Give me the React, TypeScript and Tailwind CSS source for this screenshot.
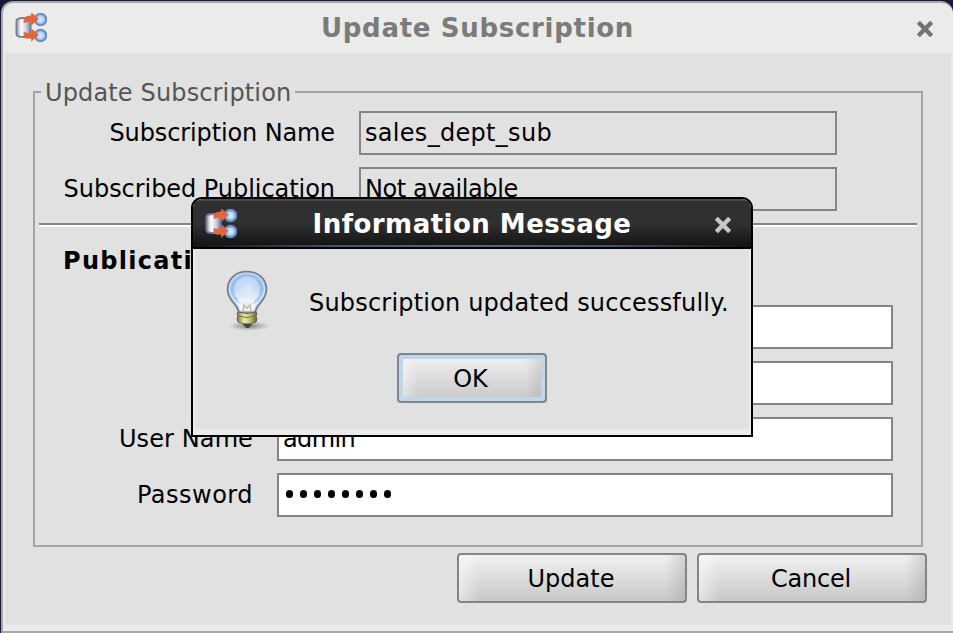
import React from 'react';

function ReplicationIcon({ className = '' }: { className?: string }) {
  return (
    <svg viewBox="0 0 32 32" className={`h-8 w-8 shrink-0 ${className}`}>
      <defs>
        <linearGradient id="cyl" x1="0" x2="1">
          <stop offset="0" stopColor="#9a9db8" />
          <stop offset="0.35" stopColor="#ffffff" />
          <stop offset="0.65" stopColor="#d5d6e4" />
          <stop offset="1" stopColor="#8286a8" />
        </linearGradient>
        <radialGradient id="orb">
          <stop offset="0" stopColor="#dbeeff" />
          <stop offset="0.55" stopColor="#b4d6f5" />
          <stop offset="1" stopColor="#6f95cc" />
        </radialGradient>
      </defs>
      <path d="M1.500 8c0-4 14-4 14 0v13c0 4-14 4-14 0z" fill="url(#cyl)" stroke="#7c7f9c" strokeWidth="2" />
      <circle cx="25.500" cy="6.500" r="5.800" fill="url(#orb)" stroke="#6b8fc4" strokeWidth="2" />
      <circle cx="25.500" cy="22.500" r="5.800" fill="url(#orb)" stroke="#6b8fc4" strokeWidth="2" />
      <path d="M9.500 5.500q3.500-2.500 7.500-2V1l5.500 5-5.500 5V8.500q-4-1-7.500.5z" fill="#ed6131" stroke="#dd6a42" strokeWidth="1.600" />
      <path d="M9.500 20q3.500 1.500 7.500 0v-3l5.500 5-5.500 5v-2.500q-4 1-7.500-.5z" fill="#ed6131" stroke="#dd6a42" strokeWidth="1.600" />
    </svg>
  );
}

function CloseIcon() {
  return (
    <svg viewBox="0 0 16 16" className="h-4 w-4" fill="none" stroke="currentColor" strokeWidth="4.400">
      <path d="M1.300 1.300l13.400 13.400M14.700 1.300L1.300 14.700" />
    </svg>
  );
}

function BulbIcon() {
  return (
    <svg viewBox="0 0 48 64" className="h-16 w-12">
      <defs>
        <radialGradient id="glass" cx=".5" cy=".45" r=".55">
          <stop offset="0" stopColor="#d9e8f8" />
          <stop offset=".65" stopColor="#b9d5f4" />
          <stop offset="1" stopColor="#8eb6e8" />
        </radialGradient>
        <linearGradient id="fade" x2="0" y2="1">
          <stop offset=".4" stopColor="#fff" stopOpacity="0" />
          <stop offset=".85" stopColor="#fafafa" stopOpacity=".95" />
        </linearGradient>
        <linearGradient id="brass">
          <stop offset="0" stopColor="#77783f" />
          <stop offset=".35" stopColor="#e9e9a5" />
          <stop offset=".65" stopColor="#c2c275" />
          <stop offset="1" stopColor="#5e5e35" />
        </linearGradient>
        <radialGradient id="shade">
          <stop offset="0" stopColor="#555" stopOpacity=".75" />
          <stop offset="1" stopColor="#777" stopOpacity="0" />
        </radialGradient>
      </defs>
      <ellipse cx="26" cy="56" rx="21" ry="5" fill="url(#shade)" />
      <path d="M24 1.500C12.500 1.500 4.500 9 4.500 19.500c0 6 3 10 6 13.500 2.500 3 4.500 6 5 9h17c.5-3 2.500-6 5-9 3-3.500 6-7.500 6-13.500C43.500 9 35.500 1.500 24 1.500z" fill="url(#glass)" stroke="#777c8b" strokeWidth="1.600" />
      <path d="M24 3.500C13.500 3.500 6.500 10 6.500 19.500c0 5 3 9 6 12.500 2.500 3 4.300 6 4.600 9h13.800c.3-3 2.100-6 4.600-9 3-3.500 6-7.500 6-12.500C41.500 10 34.500 3.500 24 3.500z" fill="url(#fade)" stroke="#d5e4f8" strokeWidth="1" />
      <circle cx="24" cy="19.500" r="14.500" fill="none" stroke="#7ea9e2" strokeWidth="3" opacity=".5" />
      <path d="M14 30q5-3 10-1t10-3l-4 8-2 6h-8l-2-6z" fill="#f4f4f4" opacity=".85" />
      <path d="M20 41l1-6 3 3 3-3 1 6" fill="none" stroke="#c0c2a5" strokeWidth="1.600" />
      <path d="M15 42q9 3 18 0l1 2-1 2 1 3-1 3q-9 4-18 0l-1-3 1-3-1-2z" fill="url(#brass)" stroke="#66663e" />
      <path d="M15 46q9 3 18 0" fill="none" stroke="#77773f" />
      <path d="M20 54h9l-3 4h-3z" fill="#45453b" />
    </svg>
  );
}

type FieldProps = { label?: string; value?: string; labelWidth: string; width: string; fill: string; track?: string; valueTrack?: string };

function Field({ label, value, labelWidth, width, fill, track = '', valueTrack = '' }: FieldProps) {
  return (
    <div className="flex h-11 items-center">
      <label className={`${labelWidth} shrink-0 text-right ${track}`}>{label}</label>
      <div className={`h-11 ${width} border-2 border-[#858585] ${fill} pl-1 leading-[40px] ${valueTrack}`}>{value}</div>
    </div>
  );
}

function PasswordField() {
  return (
    <div className="flex h-11 items-center">
      <label className="w-[218px] shrink-0 text-right tracking-[0.5px]">Password</label>
      <div className="ml-6 flex h-11 w-[616px] items-center gap-[7px] border-2 border-[#858585] bg-white pb-0.5 pl-[7px]">
        {Array.from({ length: 8 }, (_, i) => (
          <span key={i} className="h-2 w-[7px] rounded-[3.5px] bg-black" />
        ))}
      </div>
    </div>
  );
}

function Button({ children, focus = false, track = '' }: { children: string; focus?: boolean; track?: string }) {
  return (
    <button
      className={`h-[50px] rounded-[4px] border-2 text-center leading-[48px] ${track} bg-[linear-gradient(90deg,rgba(255,255,255,.5)_0,transparent_20px,transparent_calc(100%-20px),rgba(140,140,140,.3)_100%),linear-gradient(#f1f1f1,#c8c8c8)] ${
        focus ? 'w-[150px] border-[#7e858d] pr-[3px] shadow-[inset_0_0_0_4px_#c3d5e8]' : 'w-[230px] border-[#858585] pr-0.5'
      }`}
    >
      {children}
    </button>
  );
}

function InformationDialog() {
  return (
    <section className="absolute left-[191px] top-[197px] h-[240px] w-[562px] overflow-hidden rounded-t-[11px] border-2 border-black bg-[#ebebeb]">
      <header className="flex h-[50px] items-center border-b-2 border-black bg-[linear-gradient(#4b4b4b_0,#4b4b4b_2px,#303030_2px,#303030_24px,#181818_44px,#111_100%)] pl-3 pr-[20px]">
        <ReplicationIcon className="translate-y-0.5" />
        <h2 className="flex-1 whitespace-nowrap pr-2 pt-0.5 text-center text-[26px] font-bold leading-[48px] tracking-[0.48px] text-white">Information Message</h2>
        <span className="mt-1 text-[#c7c7c7]"><CloseIcon /></span>
      </header>
      <div className="relative -mt-1 h-0.5 bg-[linear-gradient(90deg,transparent,#42546f_25%,#536883_50%,#42546f_75%,transparent)]" />
      <div className="mx-0.5 mt-0.5 flex h-[180px] flex-col items-center bg-[#e1e1e1]">
        <div className="flex h-[104px] w-full pl-7 pt-[21px]">
          <BulbIcon />
          <p className="ml-[38px] mt-[17px] whitespace-nowrap leading-[32px] tracking-[0.19px]">Subscription updated successfully.</p>
        </div>
        <Button focus>OK</Button>
      </div>
    </section>
  );
}

export default function App() {
  return (
    <div className="relative h-[633px] w-[953px] overflow-hidden bg-[#171939] pl-px pt-px font-['DejaVu_Sans'] text-[24px] text-black">
      <main className="h-[632px] w-[952px] rounded-t-[12px] border-2 border-r-0 border-[#a6a6ac] border-b-[#a6a6a6] bg-[#ebebea]">
        <header className="flex h-[50px] items-center pl-3 pr-5">
          <ReplicationIcon className="translate-y-px" />
          <h1 className="flex-1 pr-[9px] text-center text-[26px] font-bold leading-[50px] tracking-[0.7px] text-[#7b7b7b]">Update Subscription</h1>
          <span className="mt-0.5 text-[#737373]"><CloseIcon /></span>
        </header>
        <div className="ml-0.5 h-[572px] w-[946px] bg-[#e1e1e1] pl-7 pt-[38px]">
          <fieldset className="h-[456px] w-[890px] border-2 border-[#a3a3a3]">
            <div className="-mt-[16px] ml-1.5 h-8 w-[254px] bg-[#e1e1e1] pl-1 leading-8 tracking-[0.14px] text-[#555]">Update Subscription</div>
            <div className="mt-0.5 flex flex-col gap-3">
              <Field label="Subscription Name" value="sales_dept_sub" labelWidth="w-[300px] mr-6" width="w-[478px]" fill="" track="tracking-[-0.12px]" valueTrack="tracking-[0.3px]" />
              <Field label="Subscribed Publication" value="Not available" labelWidth="w-[300px] mr-6" width="w-[478px]" fill="" track="tracking-[-0.05px]" valueTrack="tracking-[-0.4px]" />
            </div>
            <hr className="mx-1 mt-3 h-1 border-b-2 border-t-2 border-b-white border-t-[#858585]" />
            <h2 className="ml-7 mt-[18px] h-[60px] font-bold leading-8 tracking-[1.3px]">Publication</h2>
            <div className="flex flex-col gap-3">
              <Field labelWidth="w-[218px] mr-6" width="w-[616px]" fill="bg-white" />
              <Field labelWidth="w-[218px] mr-6" width="w-[616px]" fill="bg-white" />
              <Field label="User Name" value="admin" labelWidth="w-[218px] mr-6" width="w-[616px]" fill="bg-white" track="tracking-[0.1px]" valueTrack="tracking-[-0.6px]" />
              <PasswordField />
            </div>
          </fieldset>
          <div className="mt-1.5 flex justify-end gap-2.5 pr-6">
            <Button>Update</Button>
            <Button track="tracking-[-0.2px]">Cancel</Button>
          </div>
        </div>
      </main>
      <InformationDialog />
    </div>
  );
}
